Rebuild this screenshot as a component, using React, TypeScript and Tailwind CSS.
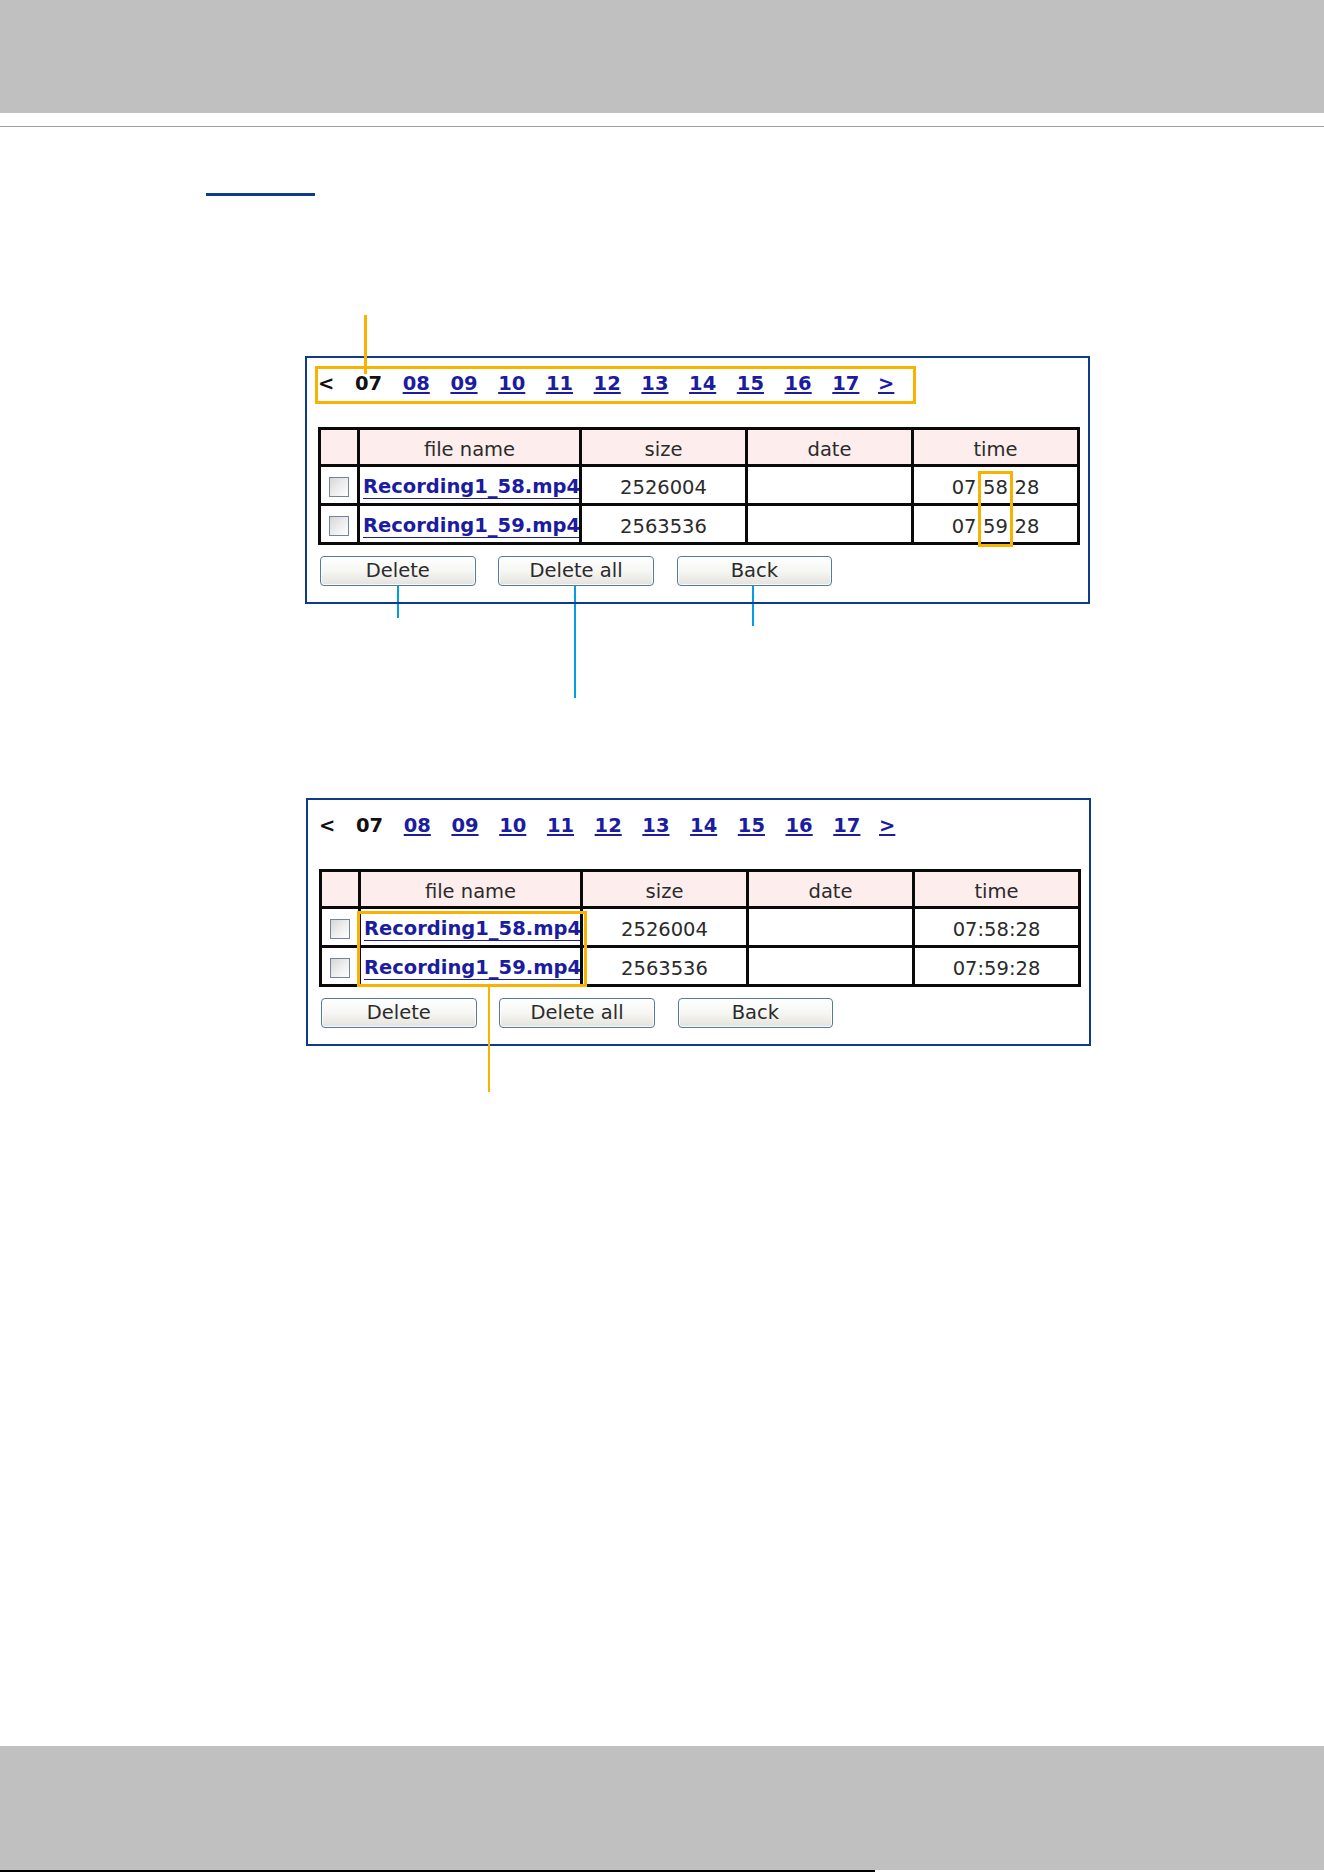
import React from "react";

const PAGES = ["08", "09", "10", "11", "12", "13", "14", "15", "16", "17"];
const ROWS = [
  { name: "Recording1_58.mp4", size: "2526004", date: "", time: "07:58:28" },
  { name: "Recording1_59.mp4", size: "2563536", date: "", time: "07:59:28" },
];

function Checkbox() {
  return (
    <span className="block w-[20px] h-[20px] border border-[#71849a] bg-gradient-to-br from-[#d6d6d6] via-[#ededed] to-white" />
  );
}

function Button({ label }: { label: string }) {
  return (
    <button
      type="button"
      className="w-[155.5px] h-[30px] rounded-[4px] border border-[#58799f] bg-gradient-to-b from-white via-[#f6f6f3] to-[#e4e2db] text-[19.5px] leading-[28px] text-[#2b2b2b] shadow-[inset_0_0_0_1px_rgba(255,255,255,0.8)]"
    >
      {label}
    </button>
  );
}

function Panel({
  variant,
  offsetClass,
}: {
  variant: 1 | 2;
  offsetClass: string;
}) {
  return (
    <div className={`relative w-[785px] ${offsetClass}`}>
      {variant === 1 && (
        <>
          <div className="absolute left-[92px] top-[226px] w-[2.2px] h-[36px] bg-[#009fe3]" />
          <div className="absolute left-[268.5px] top-[226px] w-[2.4px] h-[116px] bg-[#009fe3]" />
          <div className="absolute left-[447px] top-[226px] w-[2.2px] h-[44px] bg-[#009fe3]" />
        </>
      )}
      <div className="relative z-10 border-2 border-[#0d3a8a] pt-[14px] pb-[16px]">
        <div className="flex items-center h-[24px] pl-[11px] gap-[20.6px] text-[19.5px] leading-[24px] font-bold">
          <span className="text-[#111]">&lt;</span>
          <span className="text-[#111]">07</span>
          {PAGES.map((p) => (
            <a
              key={p}
              href="#"
              className="text-[#1c1ca0] underline decoration-[1.5px] underline-offset-[1.5px]"
            >
              {p}
            </a>
          ))}
          <a
            href="#"
            className="-ml-[2px] text-[#1c1ca0] underline decoration-[1.5px] underline-offset-[1.5px]"
          >
            &gt;
          </a>
        </div>

        <div className="ml-[11px] mt-[31px] w-[762px] grid grid-cols-[36px_219px_163px_163px_163px] grid-rows-[34px_36px_36px] gap-[3px] p-[3px] bg-[#0a0a0a] text-[19.5px] leading-[24px] text-[#2b2b2b]">
          <div className="bg-[#fdeded]" />
          <div className="bg-[#fdeded] flex items-center justify-center pt-[5px]">file name</div>
          <div className="bg-[#fdeded] flex items-center justify-center pt-[5px]">size</div>
          <div className="bg-[#fdeded] flex items-center justify-center pt-[5px]">date</div>
          <div className="bg-[#fdeded] flex items-center justify-center pt-[5px]">time</div>
          {ROWS.map((r) => (
            <React.Fragment key={r.name}>
              <div className="bg-white flex items-center justify-center pt-[4px]">
                <Checkbox />
              </div>
              <div className="bg-white flex items-center pl-[3px] pt-[3px] whitespace-nowrap overflow-hidden">
                <a
                  href="#"
                  className="font-bold text-[#1c1ca0] underline decoration-[1.3px] underline-offset-[4.6px]"
                >
                  {r.name}
                </a>
              </div>
              <div className="bg-white flex items-center justify-center pt-[5px]">{r.size}</div>
              <div className="bg-white flex items-center justify-center pt-[5px]">{r.date}</div>
              <div className="bg-white flex items-center justify-center pt-[5px]">{r.time}</div>
            </React.Fragment>
          ))}
        </div>

        <div className="ml-[13px] mt-[11px] flex gap-[22.8px]">
          <Button label="Delete" />
          <Button label="Delete all" />
          <Button label="Back" />
        </div>

        {variant === 1 && (
          <>
            <div className="absolute left-[8px] top-[7.5px] w-[601px] h-[38.5px] border-[3px] border-[#f9b200]" />
            <div className="absolute left-[57px] top-[-43px] w-[3px] h-[59px] bg-[#f9b200]" />
            <div className="absolute left-[671px] top-[112.7px] w-[35px] h-[76.3px] border-[3px] border-[#f9b200]" />
          </>
        )}
        {variant === 2 && (
          <>
            <div className="absolute left-[49px] top-[111px] w-[230px] h-[76px] border-[3px] border-[#f9b200]" />
            <div className="absolute left-[180px] top-[184px] w-[2.3px] h-[108px] bg-[#f9b200]" />
          </>
        )}
      </div>
    </div>
  );
}

export default function App() {
  return (
    <div className="w-full h-[1872px] bg-white font-['DejaVu_Sans',Verdana,sans-serif] flex flex-col">
      <div className="h-[113px] bg-[#bfc0bf]" />
      <div className="mt-[12.5px] h-[1.5px] bg-[#9f9f9f]" />
      <div className="mt-[66px] ml-[206px] w-[109px] h-[3px] bg-[#0f3a89]" />
      <Panel variant={1} offsetClass="mt-[160px] ml-[305px]" />
      <Panel variant={2} offsetClass="mt-[194px] ml-[306px]" />
      <div className="flex-1" />
      <div className="h-[124px] bg-[#bfc0bf]" />
      <div className="h-[2px] w-[875px] bg-black" />
    </div>
  );
}
